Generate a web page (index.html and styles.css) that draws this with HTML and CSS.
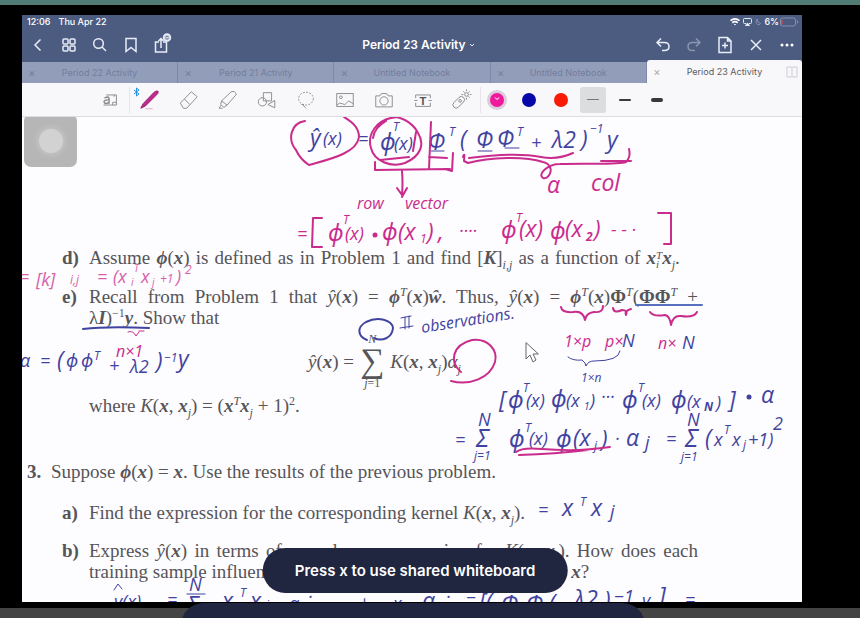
FILE: index.html
```html
<!DOCTYPE html>
<html lang="en">
<head>
<meta charset="utf-8">
<title>Period 23 Activity</title>
<link rel="stylesheet" href="styles.css">
</head>
<body>
<div class="screen">
<main class="tablet">
  <header class="header">
    <div class="status">
      <span>12:06</span><span>Thu Apr 22</span>
      <span class="status-right">
        <svg width="10" height="8" viewBox="0 0 10 8" fill="none" stroke="#fff" stroke-width="1.7"><path d="M.5 2.7Q5-.9 9.500 2.700M2.300 4.700Q5 2.700 7.700 4.700"/><path d="M3.800 6 5 7.500 6.200 6Z" fill="#fff" stroke="none"/></svg>
        <svg width="9" height="8" viewBox="0 0 9 8" fill="none" stroke="#e4e9f3"><path d="M3 5.500H1.500Q.5 5.500.5 4.500V1.500Q.5.5 1.500.5H7.500Q8.500.5 8.500 1.500V4.500Q8.500 5.500 7.500 5.500H6"/><path d="M2.500 7.500 4.500 5 6.500 7.500Z" fill="#fff"/></svg>
        <svg width="6" height="8" viewBox="0 0 6 8" fill="none" stroke="#8390b2"><path d="M2 1Q0 5 2.500 6.500 4 7.500 5.500 5.500 2 5 2 1Z"/></svg>
        <span>6%</span>
        <svg class="battery" width="19" height="10" viewBox="0 0 19 10" fill="none" stroke="#8791ae"><rect x=".5" y="1" width="15" height="8" rx="2"/><path d="M17.500 3.500V6.500"/><path d="M2 3V7" stroke="#bd5268" stroke-width="1.500"/></svg>
      </span>
    </div>
    <nav class="nav">
      <div class="nav-group">
        <button aria-label="Back"><svg viewBox="0 0 20 20"><path d="M12.500 4.500 7 10 12.500 15.500"/></svg></button>
        <button aria-label="Thumbnails"><svg viewBox="0 0 20 20"><rect x="4" y="4" width="5" height="5" rx="1"/><rect x="11" y="4" width="5" height="5" rx="1"/><rect x="4" y="11" width="5" height="5" rx="1"/><rect x="11" y="11" width="5" height="5" rx="1"/></svg></button>
        <button aria-label="Search"><svg viewBox="0 0 20 20"><circle cx="8.500" cy="8.500" r="4.800"/><path d="M12 12 16 16"/></svg></button>
        <button aria-label="Bookmark"><svg viewBox="0 0 20 20"><path d="M5 3.500H15V16.500L10 12.500 5 16.500Z"/></svg></button>
        <button aria-label="Share"><svg viewBox="0 0 20 20"><path d="M7 7H3.500V17H14.500V7H11M9 13V3.500M6.500 6 9 3.500 11.500 6"/><circle cx="15" cy="2.500" r="3.500" fill="#c3cbdc"/><path d="M13.500 2Q15 .5 16.500 2M13.500 3.500Q15 5 16.500 3.500" stroke="#63708f" stroke-width=".8"/></svg></button>
      </div>
      <button class="title">Period 23 Activity <svg viewBox="0 0 8 8"><path d="M2 3 4 5 6 3"/></svg></button>
      <div class="nav-group nav-end">
        <button aria-label="Undo"><svg viewBox="0 0 20 20"><path d="M8 3.500 4 7.500 8 11.500M4 7.500H11.500Q16 7.500 16 11.500T11.500 15.500H9"/></svg></button>
        <button aria-label="Redo" class="dim"><svg viewBox="0 0 20 20"><path d="M12 3.500 16 7.500 12 11.500M16 7.500H8.500Q4 7.500 4 11.500T8.500 15.500H11"/></svg></button>
        <button aria-label="Add page"><svg viewBox="0 0 20 20"><path d="M4 2.500H12.500L16 6V17.500H4ZM12.500 2.500V6H16M7 10.500H13M10 7.500V13.500"/></svg></button>
        <button aria-label="Close"><svg viewBox="0 0 20 20"><path d="M5 5 15 15M15 5 5 15"/></svg></button>
        <button aria-label="More"><svg viewBox="0 0 20 20"><g fill="#fff" stroke="none"><circle cx="5" cy="10" r="1.500"/><circle cx="10" cy="10" r="1.500"/><circle cx="15" cy="10" r="1.500"/></g></svg></button>
      </div>
    </nav>
    <div class="tabs">
      <div class="tab"><button class="close" aria-label="Close tab">×</button><button class="name">Period 22 Activity</button></div>
      <div class="tab"><button class="close" aria-label="Close tab">×</button><button class="name">Period 21 Activity</button></div>
      <div class="tab"><button class="close" aria-label="Close tab">×</button><button class="name">Untitled Notebook</button></div>
      <div class="tab"><button class="close" aria-label="Close tab">×</button><button class="name">Untitled Notebook</button></div>
      <div class="tab active"><button class="close" aria-label="Close tab">×</button><button class="name">Period 23 Activity</button><svg class="split" viewBox="0 0 12 12"><path d="M1 1H11V11H1ZM6 1V11"/></svg></div>
    </div>
  </header>

  <div class="toolbar">
    <button class="tool ruled" aria-label="Zoom window"><svg viewBox="0 0 24 24"><path d="M8 6.500H19V17.500H5M15 17.500V14.500H19M16.500 6.500V8.500"/><path d="M6 10Q11 7 11 11V16M11 12Q5 11.500 5.500 14.500 6.500 17 11 14.500" stroke-width="1.500"/></svg></button>
    <button class="tool" aria-label="Pen"><svg viewBox="0 0 24 24"><path d="M2 21 4.500 16 16.500 3.500Q20.500 1 21 3 21 5 18.500 7L7 18.500Z" fill="#c2298c" stroke="#8d1c67"/><path d="M7 21.500H15" stroke="#e5a5c8"/></svg><svg class="bluetooth" viewBox="0 0 8 10"><path d="M1 3 6 7 3.500 9V1L6 3 1 7" stroke="#2490e5"/></svg></button>
    <button class="tool" aria-label="Eraser"><svg viewBox="0 0 24 24"><path d="M2.500 15.500 14.500 3 21 8.500 9.500 21H6ZM7 11 13 17"/></svg></button>
    <button class="tool" aria-label="Highlighter"><svg viewBox="0 0 24 24"><path d="M5 13 15.500 3Q20 1.500 21 6L11 17.500ZM5 13 4 17 7.500 20 11 17.500M4 18 2.500 21H6"/></svg></button>
    <button class="tool" aria-label="Shapes"><svg viewBox="0 0 24 24"><path d="M8 4H17V13H8Z"/><circle cx="7" cy="14" r="4.500"/><path d="M13 17 20.500 12.500V20.500Z"/></svg></button>
    <button class="tool" aria-label="Lasso"><svg viewBox="0 0 24 24"><ellipse cx="12" cy="10.500" rx="8" ry="7" stroke-dasharray="2 1.500"/><path d="M7 17Q10 16 9.500 18.500 11 20 12 21"/></svg></button>
    <button class="tool" aria-label="Image"><svg viewBox="0 0 24 24"><rect x="3" y="5" width="18" height="14"/><circle cx="7.500" cy="9" r="1.500"/><path d="M3 17.500Q6 14 9 16T13 16L16 13 21 16"/></svg></button>
    <button class="tool" aria-label="Camera"><svg viewBox="0 0 24 24"><path d="M3 7.500H7.500L9 5H15L16.500 7.500H21V19.500H3Z"/><circle cx="12" cy="13" r="4.500"/></svg></button>
    <button class="tool" aria-label="Text"><svg viewBox="0 0 24 24"><path d="M4 10V6.500H20V10M4 15V19H20V15M2.500 12.500H6M18 12.500H21.500"/><text class="tool-letter" x="12" y="17" text-anchor="middle">T</text></svg></button>
    <button class="tool ruled" aria-label="Laser pointer"><svg viewBox="0 0 24 24"><rect x="2" y="11" width="15" height="7" rx="3.500" transform="rotate(-45 9.500 14.500)"/><circle cx="11" cy="13" r="1.500"/><circle cx="18" cy="6" r="2"/><path d="M18 .5V2.500M18 9.500V11.500M12.500 6H14.500M21.500 6H23.500M14.500 2.500 16 4M20 8 21.500 9.500M20 4 21.500 2.500"/></svg></button>
    <button class="choice" aria-label="Pink"><span class="dot pink selected">⌄</span></button>
    <button class="choice" aria-label="Navy"><span class="dot navy"></span></button>
    <button class="choice" aria-label="Red"><span class="dot red"></span></button>
    <button class="choice" aria-label="Thin stroke"><span class="weight"><i class="stroke thin"></i></span></button>
    <button class="choice" aria-label="Medium stroke"><i class="stroke medium"></i></button>
    <button class="choice" aria-label="Thick stroke"><i class="stroke thick"></i></button>
  </div>

  <article class="page">
    <section class="part">
      <b>d)</b>
      <p class="spread narrow">Assume <b><i>ϕ</i></b>(<b><i>x</i></b>) is defined as in Problem 1 and find [<b><i>K</i></b>]<sub><i>i,j</i></sub> as a function of <b><i>x</i></b><span class="stack"><i>T</i><i>i</i></span><b><i>x</i></b><sub><i>j</i></sub>.</p>
    </section>
    <section class="part">
      <b>e)</b>
      <div>
        <p class="spread">Recall from Problem 1 that <i>ŷ</i>(<b><i>x</i></b>) = <b><i>ϕ</i></b><sup><i>T</i></sup>(<b><i>x</i></b>)<b><i>ŵ</i></b>. Thus, <i>ŷ</i>(<b><i>x</i></b>) = <b><i>ϕ</i></b><sup><i>T</i></sup>(<b><i>x</i></b>)<b>Φ</b><sup><i>T</i></sup>(<b>ΦΦ</b><sup><i>T</i></sup> +</p>
        <p>λ<b><i>I</i></b>)<sup>−1</sup><b><i>y</i></b>. Show that</p>
        <div class="equation">
          <span><i>ŷ</i>(<b><i>x</i></b>) =</span>
          <span class="sum"><i>N</i><span class="sigma">∑</span><span><i>j</i>=1</span></span>
          <span><i>K</i>(<b><i>x</i></b>, <b><i>x</i></b><sub><i>j</i></sub>)<i>α</i><sub><i>j</i></sub></span>
        </div>
        <p>where <i>K</i>(<b><i>x</i></b>, <b><i>x</i></b><sub><i>j</i></sub>) = (<b><i>x</i></b><sup><i>T</i></sup><b><i>x</i></b><sub><i>j</i></sub> + 1)<sup>2</sup>.</p>
      </div>
    </section>
    <section class="problem">
      <b>3.</b>
      <p>Suppose <b><i>ϕ</i></b>(<b><i>x</i></b>) = <b><i>x</i></b>. Use the results of the previous problem.</p>
    </section>
    <section class="part">
      <b>a)</b>
      <p>Find the expression for the corresponding kernel <i>K</i>(<b><i>x</i></b>, <b><i>x</i></b><sub><i>j</i></sub>).</p>
    </section>
    <section class="part">
      <b>b)</b>
      <div>
        <p class="spread">Express <i>ŷ</i>(<b><i>x</i></b>) in terms of <i>α</i><sub><i>j</i></sub> and your expression for <i>K</i>(<b><i>x</i></b>, <b><i>x</i></b><sub><i>j</i></sub>). How does each</p>
        <p>training sample influence the predicted value for a new sample <b><i>x</i></b>?</p>
      </div>
    </section>

    <svg class="ink" viewBox="22 117 780 485" preserveAspectRatio="xMinYMin">
      <g class="blue">
        <text class="l" x="310" y="146">ŷ</text><text class="m" x="323" y="145">(x)</text><text class="m" x="358" y="145">=</text>
        <text class="l" x="380" y="150">ϕ</text><text class="m" x="394" y="150">(x)</text><text class="s" x="393" y="131">T</text>
        <text class="l" x="428" y="150">Φ</text><text class="s" x="449" y="136">T</text><text class="l" x="460" y="147">(</text>
        <text class="l" x="476" y="148">Φ</text><text class="l" x="497" y="147">Φ</text><text class="s" x="517" y="136">T</text>
        <text class="m" x="531" y="149">+</text><text class="l" x="552" y="148">λ2</text><text class="l" x="581" y="147">)</text><text class="s" x="590" y="133">−1</text><text class="l" x="607" y="148">y</text>
        <path d="M478 151H492M505 148H519M431 151H444"/>
        <text class="m" x="20" y="367">α</text><text class="m" x="40" y="367">=</text><text class="l" x="57" y="368">(</text><text class="m" x="66" y="367">ϕ</text><text class="m" x="81" y="367">ϕ</text><text class="s" x="94" y="360">T</text>
        <text class="m" x="109" y="372">+</text><text class="m" x="130" y="373">λ2</text><text class="l" x="156" y="369">)</text><text class="s" x="164" y="362">−1</text><text class="l" x="178" y="367">y</text>
        <path d="M83 329Q107 326 149 328" class="pen"/>
        <path d="M367 340C357 336 357 327 366 322 378 316 392 320 393 328 392 338 382 342 374 338" class="pen"/>
        <path d="M401 318 411 316M400 328 413 326M405 317V329M409 316V328"/>
        <text class="o" transform="rotate(-9 422 333)" x="422" y="333">observations.</text>
        <path d="M636 305H702" class="pen sky"/>
        <text class="m" x="622" y="347">N</text><text class="m" x="682" y="349">N</text>
        <path d="M568 357Q573 361 582 360 586 363 586 366 588 361 594 361 619 361 620 351"/>
        <text class="s" x="581" y="382">1×n</text>
        <text class="l" x="499" y="408">[</text><text class="l" x="508" y="408">ϕ</text><text class="s" x="523" y="392">T</text><text class="m" x="526" y="407">(x)</text><text class="l" x="551" y="407">ϕ</text><text class="m" x="566" y="407">(x</text><text class="t" x="584" y="410">1</text><text class="m" x="590" y="407">)</text><text class="m" x="601" y="403">···</text>
        <text class="l" x="622" y="408">ϕ</text><text class="s" x="638" y="392">T</text><text class="m" x="642" y="407">(x)</text><text class="l" x="671" y="408">ϕ</text><text class="m" x="687" y="408">(x</text><text class="s heavy" x="704" y="411">N</text><text class="m" x="716" y="409">)</text><text class="l" x="729" y="408">]</text><circle cx="749" cy="397" r="2.500"/><text class="l" x="761" y="403">α</text>
        <text class="m" x="455" y="446">=</text><text class="m" x="478" y="426">N</text><text class="x" x="476" y="447">Σ</text><text class="s" x="474" y="460">j=1</text>
        <text class="l" x="509" y="447">ϕ</text><text class="s" x="525" y="432">T</text><text class="m" x="529" y="445">(x)</text><text class="l" x="556" y="447">ϕ</text><text class="l" x="573" y="446">(x</text><text class="s" x="594" y="450">j</text><text class="l" x="601" y="447">)</text><text class="m" x="615" y="445">·</text><text class="l" x="626" y="446">α</text><text class="m" x="645" y="449">j</text>
        <text class="m" x="666" y="445">=</text><text class="m" x="687" y="426">N</text><text class="x" x="685" y="447">Σ</text><text class="s" x="681" y="461">j=1</text><text class="l" x="705" y="446">(</text><text class="m" x="714" y="446">x</text><text class="s" x="724" y="434">T</text><text class="m" x="732" y="446">x</text><text class="s" x="743" y="449">j</text><text class="m" x="748" y="446">+1)</text><text class="m" x="773" y="430">2</text>
        <text class="m" x="538" y="516">=</text><text class="l" x="562" y="516">x</text><text class="s" x="580" y="506">T</text><text class="l" x="591" y="516">x</text><text class="m" x="610" y="518">j</text>
        <path d="M114 590 118 584 122 589M187 594H205"/>
        <text class="m" x="114" y="608">y(x)</text><text class="m" x="167" y="606">=</text><text class="m" x="189" y="591">N</text><text class="l" x="187" y="613">Σ</text><text class="l" x="222" y="609">x</text><text class="s" x="240" y="597">T</text><text class="l" x="250" y="609">x</text><text class="s" x="266" y="609">j</text><text class="m" x="289" y="610">α</text><text class="m" x="308" y="603">·</text><text class="m" x="359" y="609">+</text><text class="m" x="393" y="610">x</text><text class="l" x="422" y="609">α</text><text class="m" x="446" y="603">·</text>
        <text class="m" x="466" y="604">−</text><text class="l" x="479" y="610">[(</text><text class="l" x="501" y="612">Φ</text><text class="l" x="526" y="612">Φ</text><text class="l" x="549" y="611">(</text><text class="l" x="574" y="607">λ2</text><text class="l" x="604" y="608">)</text><text class="m" x="614" y="603">−1</text><text class="m" x="642" y="607">y</text><text class="l" x="659" y="604">]</text><text class="m" x="685" y="606">=</text>
      </g>
      <g class="rose">
        <path class="pen" d="M305 121C291 123 287 139 296 150Q300 159 309 165C326 160 357 154 359 137 359 126 350 121 344 117"/>
        <path class="pen" d="M398 117C376 118 367 135 371 148 374 161 391 168 405 163 421 156 425 144 418 133 414 125 405 118 395 117M373 138Q374 128 386 121M380 160 409 157M416 132 413 151"/>
        <path class="pen" d="M431 122 429 169M429 157 447 158M375 162V170L450 169M453 153 452 171 445 169"/>
        <path class="pen" d="M402 171Q403 183 402 195L397 188M402 197 407 188M463 157Q465 151 464 161L468 163C490 157 525 156 543 162 556 165 550 180 543 178 537 174 548 164 560 164 588 163 618 165 626 162Q631 157 629 149M469 158Q515 152 541 157 558 160 573 153M601 161H631"/>
        <text class="l" x="547" y="193">α</text><text class="l" x="591" y="191">col</text>
        <text class="o" x="357" y="209">row</text><text class="o" x="405" y="209">vector</text>
        <text class="m" x="297" y="240">=</text>
        <path class="pen" d="M322 218 313 218 312 247 322 247M658 213 671 213 671 244 664 244"/>
        <text class="l" x="328" y="241">ϕ</text><text class="s" x="343" y="224">T</text><text class="m" x="345" y="240">(x)</text><circle cx="375" cy="235" r="2.500"/><text class="l" x="382" y="240">ϕ</text><text class="l" x="398" y="240">(x</text><text class="s" x="420" y="243">1</text><text class="l" x="427" y="240">)</text><text class="l" x="438" y="240">,</text>
        <text class="m" x="459" y="237">····</text><text class="l" x="501" y="238">ϕ</text><text class="s" x="516" y="222">T</text><text class="l" x="519" y="237">(x)</text><text class="l" x="550" y="239">ϕ</text><text class="l" x="565" y="237">(x</text><text class="s heavy" x="586" y="241">2</text><text class="l" x="594" y="237">)</text><text class="m" x="611" y="236">- - ·</text>
        <g class="faded"><text class="m" x="19" y="283">=</text><text class="m" x="36" y="286">[k]</text><text class="s" x="70" y="284">i,j</text><text class="m" x="97" y="283">=</text><text class="m" x="113" y="283">(x</text><text class="t" x="134" y="272">T</text><text class="t" x="131" y="286">i</text><text class="m" x="141" y="283">x</text><text class="t" x="152" y="286">j</text><text class="s" x="160" y="283">+1</text><text class="m" x="176" y="283">)</text><text class="s" x="185" y="274">2</text></g>
        <text class="o" x="116" y="357">n×1</text><path d="M128 332Q133 330 136 336L139 332M139 331H144"/>
        <path class="pen" d="M461 372C449 362 452 345 472 340 488 338 498 350 495 362 490 378 470 386 451 381"/>
        <path class="pen" d="M561 307Q562 313 573 312 583 310 585 320 586 313 594 312 603 313 603 306M613 308Q614 314 622 310 628 310 626 315 624 311 631 309M650 312Q653 317 665 315 670 316 671 325 673 315 681 316 694 318 697 312"/>
        <text class="o" x="564" y="347">1×p</text><text class="o" x="605" y="347">p×</text><text class="o" x="658" y="349">n×</text>
        <path class="pen" d="M516 452Q522 447 542 449 578 452 610 447M519 455Q555 454 588 450"/>
      </g>
      <path class="cursor" d="M526 343V359L530 355 533 362 536 360 533 354H538Z"/>
    </svg>
    <button class="assistive" aria-label="AssistiveTouch"><span></span></button>
  </article>
</main>
<footer class="footer"></footer>
<div class="toast" role="status">Press x to use shared whiteboard</div>
<div class="drawer"></div>
</div>
</body>
</html>
```
FILE: styles.css
```css
* { box-sizing: border-box; }
body { margin: 0; background: #000; font-family: Inter, "Liberation Sans", sans-serif; }
button { padding: 0; border: 0; background: none; color: inherit; font: inherit; }
svg { display: block; }
p { margin: 0; }
.screen {
  position: relative;
  display: flex;
  flex-direction: column;
  min-height: 100vh;
  overflow: hidden;
  border-top: 5px solid #507c75;
}
.tablet {
  display: flex;
  flex: 1;
  flex-direction: column;
  margin: 10px 58px 6px 22px;
  background: #fdfcfe;
}
.footer { height: 10px; background: #444; }

.header { background: #4c5b80; color: #fff; }
.status {
  display: flex;
  gap: 8px;
  height: 14px;
  padding: 0 3px 0 5px;
  font-size: 9px;
  font-weight: 500;
  line-height: 14px;
}
.status-right { display: flex; align-items: center; gap: 3px; margin-left: auto; }
.battery { margin-left: -2px; }
.nav { display: grid; grid-template-columns: 1fr auto 1fr; align-items: center; height: 31px; }
.nav-group { display: flex; }
.nav-end { justify-content: flex-end; }
.nav-group button { width: 31px; }
.nav-group svg { width: 20px; height: 20px; margin: auto; overflow: visible; }
.nav svg { fill: none; stroke: #e8edf7; stroke-width: 1.5; }
.nav .dim { opacity: 0.4; }
.title { display: flex; align-items: center; gap: 2px; padding-left: 14px; font-size: 12px; font-weight: 600; }
.title svg { width: 8px; height: 8px; stroke-width: 1; }
.tabs { display: flex; align-items: flex-end; height: 23px; }
.tab {
  display: flex;
  flex: 1;
  align-items: center;
  height: 21px;
  background: #929dba;
  color: #727e9c;
  border-right: 1px solid #7d89a8;
  font-size: 9px;
}
.tab .close { width: 20px; font-size: 11px; }
.tab .name { flex: 1; padding-right: 20px; }
.tab.active { height: 23px; border: 0; border-radius: 3px 3px 0 0; background: #f8f7fa; color: #5b5b62; }
.tab.active .name { padding-right: 4px; }
.tab.active .close { color: #aaa; }
.split { width: 12px; height: 12px; margin-right: 4px; fill: none; stroke: #cfcfd4; }

.toolbar {
  display: flex;
  align-items: center;
  height: 34px;
  padding-left: 69px;
  background: #f8f7fa;
  border-bottom: 1px solid #dedde1;
}
.tool { position: relative; width: 39px; height: 26px; }
.tool svg { width: 22px; height: 22px; margin: auto; fill: none; stroke: #88878b; }
.tool .bluetooth { position: absolute; top: 0; left: 3px; width: 8px; height: 10px; }
.tool-letter { fill: #555; stroke: none; font-size: 12px; font-weight: 700; }
.ruled { border-right: 1px solid #e9e4ea; }
.choice { display: grid; place-items: center; width: 32px; height: 26px; }
.dot { width: 14px; height: 14px; border-radius: 50%; color: #fff; font-size: 8px; line-height: 9px; }
.pink { background: #f0189b; }
.navy { background: #0808a8; }
.red { background: #f71b08; }
.selected { box-shadow: 0 0 0 3px #d9ccdb; }
.weight { display: grid; place-items: center; width: 26px; height: 26px; border-radius: 3px; background: #dbdddf; }
.stroke { width: 12px; border-radius: 2px; background: #39393c; }
.thin { height: 1px; background: #77777a; }
.medium { height: 2px; }
.thick { height: 4px; }

.page {
  position: relative;
  flex: 1;
  height: 485px;
  padding-top: 130px;
  overflow: hidden;
  color: #565559;
  font-family: "Liberation Serif", "DejaVu Serif", serif;
  font-size: 19px;
  line-height: 21px;
}
.page sup, .page sub { font-size: 12px; line-height: 0; }
.part { display: grid; grid-template-columns: 27px 1fr; margin: 0 104px 17px 40px; }
.problem { display: grid; grid-template-columns: 24px 1fr; margin: 45px 0 20px 5px; }
.part p, .problem p { white-space: nowrap; }
.part .spread { white-space: normal; text-align: justify; text-align-last: justify; }
.narrow { width: 97%; }
.stack { display: inline-flex; flex-direction: column; height: 18px; font-size: 11px; line-height: 9px; vertical-align: middle; }
.equation { display: flex; align-items: center; gap: 6px; height: 67px; margin-left: 219px; }
.sum { display: flex; flex-direction: column; align-items: center; font-size: 12px; line-height: 14px; }
.sigma { font-size: 34px; line-height: 30px; }

.ink { position: absolute; inset: 0; width: 100%; font-family: "Open Sans", "Noto Sans", "DejaVu Sans", sans-serif; font-style: italic; font-weight: 400; }
.ink path { fill: none; stroke-width: 1; stroke-linecap: round; stroke-linejoin: round; }
.ink .pen { stroke-width: 2; }
.blue { fill: #4143a0; stroke: none; }
.blue path { stroke: #4143a0; }
.blue .sky { stroke: #5870c0; }
.rose { fill: #c92c8d; }
.rose path { stroke: #c92c8d; }
.faded { opacity: 0.75; }
.t { font-size: 10px; }
.s { font-size: 12px; }
.o { font-size: 16px; }
.m { font-size: 18px; }
.l { font-size: 23px; }
.x { font-size: 25px; }
.heavy { font-weight: 700; }
.ink .cursor { fill: #fff; stroke: #66666a; }

.assistive {
  position: absolute;
  top: -3px;
  left: 2px;
  display: grid;
  place-items: center;
  width: 53px;
  height: 53px;
  border-radius: 7px;
  background: #b6b6b7;
}
.assistive span { width: 24px; height: 24px; border-radius: 50%; background: #d2d2d2; box-shadow: 0 0 5px 2px #c5c5c5; }

.toast {
  position: absolute;
  bottom: 25px;
  left: 415px;
  padding: 12px 32px;
  border-radius: 23px;
  background: #202540;
  color: #fff;
  font-size: 15px;
  font-weight: 600;
  line-height: 21px;
  white-space: nowrap;
  transform: translateX(-50%);
}
.drawer {
  position: absolute;
  bottom: -30px;
  left: 21%;
  width: 54%;
  height: 45px;
  border-radius: 23px;
  background: #202540;
}
```
